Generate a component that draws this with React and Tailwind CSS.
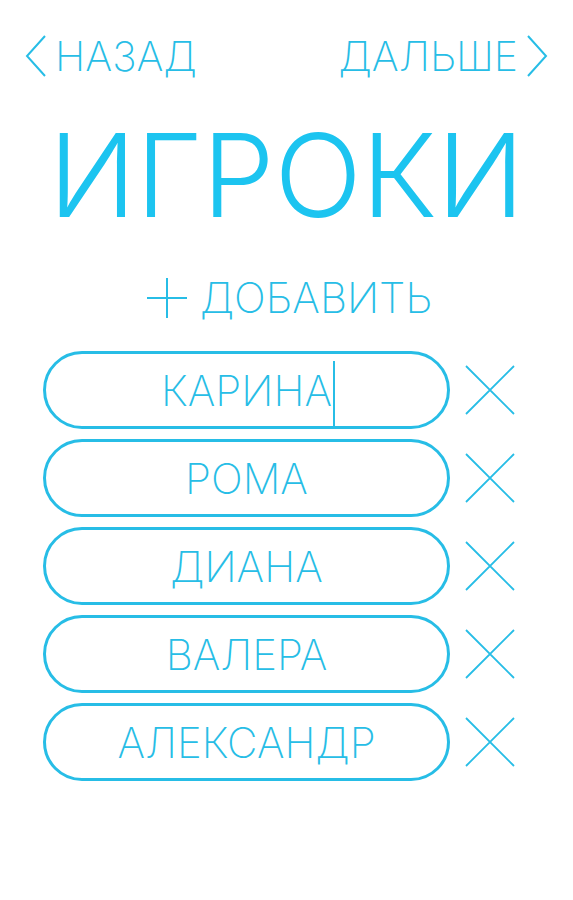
import React, { useState } from 'react';

const players = ['КАРИНА', 'РОМА', 'ДИАНА', 'ВАЛЕРА', 'АЛЕКСАНДР'];

function Chevron({ dir = 'left' }) {
    return (
        <svg width="22" height="42" viewBox="0 0 22 42" fill="none" stroke="#27bde6" strokeWidth="2">
            {dir === 'left' ? <path d="M20 1 L2 21 L20 41" /> : <path d="M2 1 L20 21 L2 41" />}
        </svg>
    );
}

function Cross() {
    return (
        <svg width="50" height="50" viewBox="0 0 50 50" fill="none" stroke="#27bde6" strokeWidth="1.8">
            <path d="M1 1 L49 49 M49 1 L1 49" />
        </svg>
    );
}

export default function App() {
    const [list] = useState(players);

    return (
        <div className="w-[573px] h-[900px] bg-white text-[#27bde6] font-['Inter','Noto_Sans',sans-serif] font-extralight">
            {/* Top nav */}
            <div className="flex justify-between items-center px-[25px] pt-[35px]">
                <button className="flex items-center gap-[8px] text-[41px] leading-none">
                    <Chevron dir="left" />
                    <span>НАЗАД</span>
                </button>
                <button className="flex items-center gap-[8px] text-[41px] leading-none">
                    <span>ДАЛЬШЕ</span>
                    <Chevron dir="right" />
                </button>
            </div>

            <h1 className="text-center text-[115px] leading-none text-[#1cc4f0] font-light mt-[41px]">ИГРОКИ</h1>

            <button className="flex items-center justify-center gap-[13px] mx-auto mt-[44px] text-[42px] leading-none pl-[6px]">
                <svg width="40" height="40" viewBox="0 0 40 40" fill="none" stroke="#27bde6" strokeWidth="2">
                    <path d="M20 0 V40 M0 20 H40" />
                </svg>
                <span>ДОБАВИТЬ</span>
            </button>

            <div className="flex flex-col gap-[10px] mt-[32px] pl-[43px]">
                {list.map((name, i) => (
                    <div key={name} className="flex items-center gap-[15px]">
                        <div className="w-[407px] h-[78px] rounded-full border-[3px] border-[#27bde6] flex items-center justify-center text-[42px]">
                            <span className="relative">
                                {name}
                                {i === 0 && <span className="absolute right-[-3px] top-[2px] bottom-[-4px] w-[1.5px] bg-[#27bde6]" />}
                            </span>
                        </div>
                        <Cross />
                    </div>
                ))}
            </div>
        </div>
    );
}
